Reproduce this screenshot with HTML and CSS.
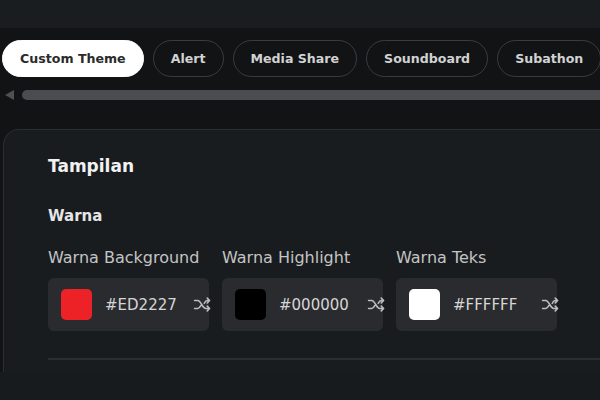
FILE: index.html
```html
<!DOCTYPE html>
<html lang="id">
<head>
  <meta charset="UTF-8">
  <title>Custom Theme</title>
  <link rel="stylesheet" href="styles.css">
</head>
<body>

<div class="topbar"></div>

<div class="main">
  <div class="tabs">
    <button class="tab active">Custom Theme</button>
    <button class="tab">Alert</button>
    <button class="tab">Media Share</button>
    <button class="tab">Soundboard</button>
    <button class="tab">Subathon</button>
  </div>

  <div class="scrollbar">
    <span class="arrow"></span>
    <span class="thumb"></span>
  </div>

  <div class="card">
    <h2>Tampilan</h2>
    <h3>Warna</h3>

    <div class="colors">
      <div class="field">
        <label>Warna Background</label>
        <div class="picker">
          <span class="swatch red"></span>
          <span class="hex">#ED2227</span>
          <svg class="shuffle" viewBox="0 0 24 24"><path d="M2 7h4c4 0 6 10 10 10h5M2 17h4c1.6 0 2.8-1.6 3.8-3.5M14.2 10.5c1-1.9 2.2-3.5 3.8-3.5h3M18 4l3 3-3 3M18 14l3 3-3 3"/></svg>
        </div>
      </div>
      <div class="field">
        <label>Warna Highlight</label>
        <div class="picker">
          <span class="swatch black"></span>
          <span class="hex">#000000</span>
          <svg class="shuffle" viewBox="0 0 24 24"><path d="M2 7h4c4 0 6 10 10 10h5M2 17h4c1.6 0 2.8-1.6 3.8-3.5M14.2 10.5c1-1.9 2.2-3.5 3.8-3.5h3M18 4l3 3-3 3M18 14l3 3-3 3"/></svg>
        </div>
      </div>
      <div class="field">
        <label>Warna Teks</label>
        <div class="picker">
          <span class="swatch white"></span>
          <span class="hex">#FFFFFF</span>
          <svg class="shuffle" viewBox="0 0 24 24"><path d="M2 7h4c4 0 6 10 10 10h5M2 17h4c1.6 0 2.8-1.6 3.8-3.5M14.2 10.5c1-1.9 2.2-3.5 3.8-3.5h3M18 4l3 3-3 3M18 14l3 3-3 3"/></svg>
        </div>
      </div>
    </div>

    <hr class="divider">
  </div>
</div>

<div class="footer"></div>

</body>
</html>
```

FILE: styles.css
```css
body {
  margin: 0;
  width: 600px;
  height: 400px;
  overflow: hidden;
  font-family: "DejaVu Sans", "Noto Sans", sans-serif;
  background-color: #181b1e;
  color: #e8e8e8;
}
.topbar {
  height: 28px;
  background-color: #1a1d20;
}
.main {
  height: 344px;
  background-color: #111315;
  padding-top: 12px;
  box-sizing: border-box;
  overflow: hidden;
}
.tabs {
  display: flex;
  gap: 9px;
  padding-left: 2px;
  white-space: nowrap;
}
.tab {
  flex-shrink: 0;
  height: 37px;
  padding: 0 17px;
  border: 1px solid #3a3d40;
  border-radius: 19px;
  background: transparent;
  color: #d2d2d2;
  font-family: inherit;
  font-size: 12.6px;
  font-weight: bold;
}
.tab.active {
  background-color: #ffffff;
  border-color: #ffffff;
  color: #2b2b2b;
}
.scrollbar {
  display: flex;
  align-items: center;
  gap: 6px;
  height: 11px;
  margin-top: 12px;
  padding-left: 5px;
}
.arrow {
  width: 0;
  height: 0;
  border-top: 5px solid transparent;
  border-bottom: 5px solid transparent;
  border-right: 9px solid #4e5053;
}
.thumb {
  flex: 1;
  height: 10px;
  margin-left: 2px;
  border-radius: 5px 0 0 5px;
  background-color: #4a4c4f;
}
.card {
  margin: 29px 0 0 3px;
  height: 260px;
  padding: 26px 0 0 44px;
  background-color: #191c1f;
  border: 1px solid #2a2d31;
  border-right: none;
  border-bottom: none;
  border-radius: 16px 0 0 0;
}
h2 {
  margin: 0;
  font-size: 17px;
  font-weight: bold;
  color: #f2f2f2;
}
h3 {
  margin: 31px 0 0;
  font-size: 15px;
  font-weight: bold;
  color: #e6e6e6;
}
.colors {
  display: flex;
  gap: 13px;
  margin-top: 23px;
}
.field label {
  display: block;
  font-size: 16px;
  color: #c4c4c4;
  margin-bottom: 11px;
}
.picker {
  display: flex;
  align-items: center;
  width: 161px;
  height: 53px;
  padding-left: 13px;
  box-sizing: border-box;
  border-radius: 6px;
  background-color: #2a2b2f;
}
.swatch {
  flex-shrink: 0;
  width: 31px;
  height: 31px;
  border-radius: 5px;
}
.red { background-color: #ed2227; }
.black { background-color: #000000; }
.white { background-color: #ffffff; }
.hex {
  flex: 1;
  margin-left: 13px;
  font-size: 15px;
  color: #d6d6d6;
}
.shuffle {
  flex-shrink: 0;
  width: 19px;
  height: 19px;
  margin-right: -3px;
  fill: none;
  stroke: #bdbdbd;
  stroke-width: 2;
  stroke-linecap: round;
  stroke-linejoin: round;
}
.divider {
  margin: 27px 0 0;
  border: none;
  height: 2px;
  background-color: #2a2d31;
}
.footer {
  height: 28px;
}
```
